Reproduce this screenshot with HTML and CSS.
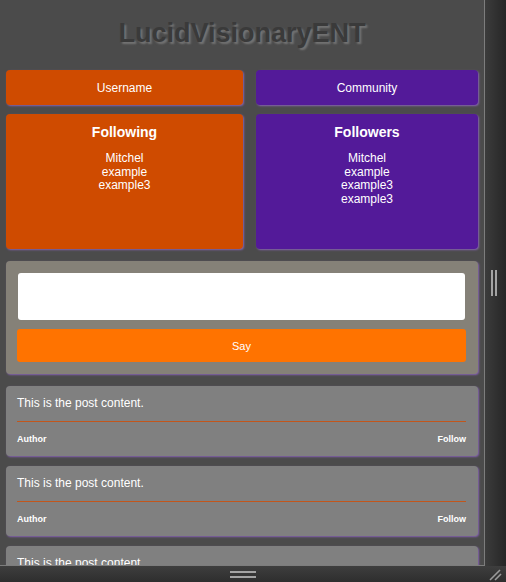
FILE: index.html
```html
<!DOCTYPE html>
<html>
<head>
<meta charset="utf-8">
<link rel="stylesheet" href="styles.css">
</head>
<body>
<div class="window">
  <div class="top">
    <main class="main">
      <h1 class="title">LucidVisionaryENT</h1>
      <div class="grid">
        <div class="tile orange">Username</div>
        <div class="tile purple">Community</div>
        <div class="list orange">
          <h2>Following</h2>
          <div class="names">Mitchel<br>example<br>example3</div>
        </div>
        <div class="list purple">
          <h2>Followers</h2>
          <div class="names">Mitchel<br>example<br>example3<br>example3</div>
        </div>
      </div>
      <form class="composer">
        <textarea class="input"></textarea>
        <button type="button" class="say">Say</button>
      </form>
      <div class="post">
        <p class="content">This is the post content.</p>
        <div class="meta"><span>Author</span><span>Follow</span></div>
      </div>
      <div class="post">
        <p class="content">This is the post content.</p>
        <div class="meta"><span>Author</span><span>Follow</span></div>
      </div>
      <div class="post">
        <p class="content">This is the post content.</p>
        <div class="meta"><span>Author</span><span>Follow</span></div>
      </div>
    </main>
    <div class="sidebar"><div class="grip-v"></div></div>
  </div>
  <div class="bottombar">
    <div class="grip-h"></div>
    <svg class="resize" width="16" height="16" viewBox="0 0 16 16">
      <line x1="3" y1="14" x2="13" y2="4" stroke="#9a9a9a" stroke-width="1.6"/>
      <line x1="8" y1="14" x2="14" y2="8" stroke="#9a9a9a" stroke-width="1.6"/>
    </svg>
  </div>
</div>
</body>
</html>
```

FILE: styles.css
```css
* { box-sizing: border-box; }
html, body { margin: 0; padding: 0; }
body {
  width: 506px;
  height: 582px;
  overflow: hidden;
  font-family: "Liberation Sans", Arial, sans-serif;
  background: #333;
}
.window { display: flex; flex-direction: column; width: 506px; height: 582px; }
.top { display: flex; height: 566px; }
.main {
  width: 485px;
  height: 566px;
  overflow: hidden;
  background: #4b4b4b;
  border-right: 1px solid #7d7d7d;
  border-bottom: 1px solid #7d7d7d;
  padding: 18px 6px 0 6px;
}
.title {
  margin: 0 0 21px 0;
  text-align: center;
  font-size: 27px;
  line-height: 31px;
  font-weight: bold;
  color: #3a3a3a;
  text-shadow: 2px 2px 2px #757575;
}
.grid {
  display: grid;
  grid-template-columns: 237px 222px;
  grid-template-rows: 35px 135px;
  column-gap: 13px;
  row-gap: 9px;
  margin-bottom: 12px;
}
.orange { background: #cf4b00; }
.purple { background: #531a99; }
.tile, .list {
  border-radius: 4px;
  box-shadow: 1px 1px 2px #8563b0;
  color: #fff;
  text-align: center;
}
.tile {
  display: flex;
  align-items: center;
  justify-content: center;
  font-size: 12px;
}
.list { padding-top: 10px; }
.list h2 {
  margin: 0 0 12px 0;
  font-size: 14px;
  line-height: 16px;
  font-weight: bold;
}
.names { font-size: 12px; line-height: 13.5px; }
.composer {
  margin: 0 0 12px 0;
  height: 113px;
  background: #858178;
  border-radius: 4px;
  box-shadow: 1px 1px 2px #8563b0;
  padding: 12px 12px 0 11px;
  display: flex;
  flex-direction: column;
}
.input {
  display: block;
  width: 447px;
  height: 47px;
  margin: 0 0 9px 1px;
  border: none;
  border-radius: 3px;
  background: #fff;
  resize: none;
}
.say {
  display: block;
  width: 449px;
  height: 33px;
  border: none;
  border-radius: 3px;
  background: #ff7300;
  color: #fff;
  font-family: "Liberation Sans", Arial, sans-serif;
  font-size: 11px;
  padding: 0;
}
.post {
  height: 70px;
  margin-bottom: 10px;
  background: #808080;
  border-radius: 4px;
  box-shadow: 1px 1px 2px #8563b0;
  padding: 10px 12px 0 11px;
  color: #fff;
}
.content {
  margin: 0;
  font-size: 12px;
  line-height: 14px;
  padding-bottom: 11px;
  border-bottom: 1px solid #c2561c;
}
.meta {
  display: flex;
  justify-content: space-between;
  font-size: 9px;
  font-weight: bold;
  line-height: 11px;
  padding-top: 12px;
}
.sidebar {
  flex: 1;
  height: 566px;
  background: linear-gradient(to right, #3c3c3c, #262626);
  position: relative;
}
.grip-v {
  position: absolute;
  left: 6px;
  top: 270px;
  width: 6px;
  height: 26px;
  border-left: 2px solid #a3a3a3;
  border-right: 2px solid #a3a3a3;
}
.bottombar {
  height: 16px;
  background: linear-gradient(to bottom, #3e3e3e, #2e2e2e);
  position: relative;
  display: flex;
  justify-content: center;
}
.grip-h {
  margin-top: 5px;
  margin-right: 20px;
  width: 26px;
  height: 7px;
  border-top: 2px solid #a3a3a3;
  border-bottom: 2px solid #a3a3a3;
}
.resize { position: absolute; right: 3px; top: 0; }
```
